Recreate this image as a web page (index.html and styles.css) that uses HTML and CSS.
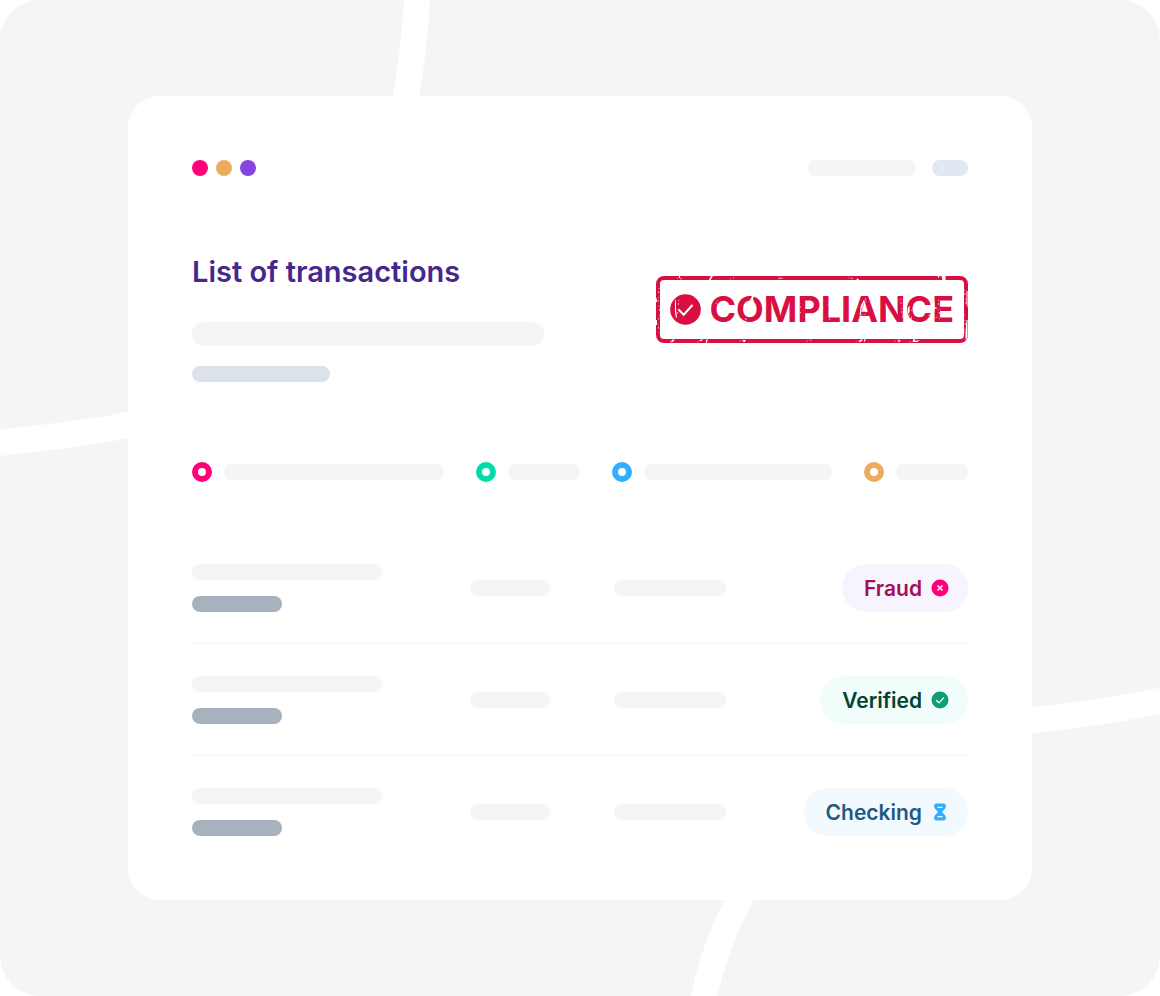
FILE: index.html
```html
<!DOCTYPE html>
<html lang="en">
<head>
  <meta charset="UTF-8" />
  <meta name="viewport" content="width=device-width, initial-scale=1.0"/>
  <title>List of transactions</title>
  <link rel="stylesheet" href="styles.css">
</head>
<body>

<main class="scene">
  <svg class="roads" viewBox="0 0 1160 996" preserveAspectRatio="none" aria-hidden="true">
    <path d="M418 -20L417 0Q414 50 406 96L402 120"/>
    <path d="M-20 446L0 443C45 437 85 434 128 425L150 420"/>
    <path d="M1010 722L1032 720C1075 716 1115 710 1160 701L1180 697"/>
    <path d="M752 876L739 900Q715 945 704 996L700 1016"/>
  </svg>

  <section class="card">
    <div class="toolbar">
      <div class="dots">
        <span class="dot pink"></span>
        <span class="dot orange"></span>
        <span class="dot purple"></span>
      </div>
      <div class="menu">
        <span class="bar menu-long"></span>
        <span class="bar menu-short"></span>
      </div>
    </div>

    <header class="intro">
      <div class="intro-text">
        <h1>List of transactions</h1>
        <div class="bar bar-title"></div>
        <div class="bar bar-subtitle"></div>
      </div>
      <div class="stamp">
        <svg class="stamp-icon" viewBox="0 0 31 31" aria-hidden="true">
          <circle cx="15.5" cy="15.5" r="15.3" fill="#d80f40"/>
          <path d="M8.5 15.5l5.200 5.200L22.500 11" fill="none" stroke="#fff" stroke-width="2"/>
        </svg>
        <span>COMPLIANCE</span>
        <!-- worn ink -->
        <svg class="wear" viewBox="0 0 312 67" preserveAspectRatio="none" aria-hidden="true">
          <g fill="#fff">
            <path d="M55 0l2 0-3 5-1-1zM23 0l1 0 0 2-1 0zM286 0l4 0 0 5-3 0zM282 0l2 0-1 2zM201 3l2 0 0 1-2 0zM123 1l2 1-1 1zM0 22l1 1 0 3-1 0zM0 44l1 0 0 5-1 0zM311 15l1 0 0 17-1-4zM311 44l1 0 0 17-2 3 0-8z"/>
            <path d="M15 66l1-2 2-1-1 3zM43 65l3-2 1 1-2 1zM50 64l2-1-1 4-1 0zM86 65l2-1 2 0-1 2zM203 66l3-3 1 1-2 2zM209 63l1 0-1 3-1-1zM242 66l2-2 1 0-1 2zM257 64l2-1 1 2 3-1-1 2-4 0z"/>
            <path d="M19 22l1 5 0 7 1 7-1 1-1-6zM53 31l2-1 0 7-1 1-1-3zM96 20l2 0-1 4 2 1-2 1-1 3-1-4-2-1 2-1zM89 42l2 1-1 1zM174 36l1 4-1 3z"/>
            <path d="M208 24l1 1-3 7-1 7-1 0 1-9zM213 39l1 5-1 1zM248 23l1 0-1 18-1 0zM252 33l2-4 0 7-2 3zM255 42l1-2 0 4zM275 41l2-3-1 5zM278 27l1-1 0 5 3 1-3 1-1 5-1-2z"/>
          </g>
          <g fill="none" stroke="#fff" stroke-width="1" stroke-dasharray="1 2 2 4" opacity="0.650">
            <path d="M3 12l-1 12 2 13-2 10 1 10M21 2l5 1M74 3l4-1M122 3l6-1M192 2l12 1M309 14l2 16M308 35l2 15-3 12"/>
            <path d="M14 66l5-2M41 66l8-3M84 65l9-1M151 65l5-1M200 66l8-3M239 65l8-2M254 66l12-2"/>
            <path d="M23 24l-2 18M62 24l-3 5M118 38l3 4M144 27l1 12M173 25l1 20M203 44l7-22M205 43l6-20M209 39l4-8M245 23l2 20M250 23l-1 20M252 43l5-11M273 43l2-14M278 44l5-5M283 24l1 20M292 26l-1 16"/>
          </g>
        </svg>
      </div>
    </header>

    <div class="filters">
      <div class="filter"><span class="ring pink"></span><span class="bar"></span></div>
      <div class="filter"><span class="ring green"></span><span class="bar"></span></div>
      <div class="filter"><span class="ring blue"></span><span class="bar"></span></div>
      <div class="filter"><span class="ring orange"></span><span class="bar"></span></div>
    </div>

    <table class="transactions" aria-label="List of transactions">
      <tbody>
        <tr>
          <td class="col-name"><div class="bar bar-name"></div><div class="bar bar-id"></div></td>
          <td class="col-date"><div class="bar bar-date"></div></td>
          <td><div class="bar bar-amount"></div></td>
          <td class="col-status">
            <span class="badge fraud">Fraud
              <svg viewBox="0 0 20 20" aria-hidden="true">
                <circle cx="10" cy="10" r="8.5" fill="#ff007a"/>
                <path d="M7.5 7.5l5 5M12.5 7.5l-5 5" fill="none" stroke="#fff" stroke-width="1.5"/>
              </svg>
            </span>
          </td>
        </tr>
        <tr>
          <td class="col-name"><div class="bar bar-name"></div><div class="bar bar-id"></div></td>
          <td class="col-date"><div class="bar bar-date"></div></td>
          <td><div class="bar bar-amount"></div></td>
          <td class="col-status">
            <span class="badge verified">Verified
              <svg viewBox="0 0 20 20" aria-hidden="true">
                <circle cx="10" cy="10" r="8.5" fill="#0e9f77"/>
                <path d="M6.2 10.2l2.7 2.6 5-5.2" fill="none" stroke="#fff" stroke-width="1.2"/>
              </svg>
            </span>
          </td>
        </tr>
        <tr>
          <td class="col-name"><div class="bar bar-name"></div><div class="bar bar-id"></div></td>
          <td class="col-date"><div class="bar bar-date"></div></td>
          <td><div class="bar bar-amount"></div></td>
          <td class="col-status">
            <span class="badge checking">Checking
              <svg viewBox="0 0 20 20" aria-hidden="true">
                <path d="M6.500 1.500h7q2.300 0 2.300 2.200v1.300q0 1-.8 1.800L12 10l3 3.200q.8.800.8 1.800v1.300q0 2.200-2.300 2.200h-7q-2.300 0-2.300-2.200V15q0-1 .8-1.800L8 10 5 6.800q-.8-.8-.8-1.800V3.700q0-2.200 2.300-2.200z" fill="#2fb0ff"/>
                <path d="M8 5.300h4M8 14.700h4" fill="none" stroke="#fff" stroke-width="1.300" stroke-linecap="round"/>
              </svg>
            </span>
          </td>
        </tr>
      </tbody>
    </table>
  </section>
</main>

</body>
</html>
```
FILE: styles.css
```css
* {
  box-sizing: border-box;
}

body {
  margin: 0;
  background: #ffffff;
  font-family: Inter, 'Open Sans', sans-serif;
}

.scene {
  position: relative;
  min-height: 100vh;
  padding: 96px 128px;
  background: #f3f5f7;
  border-radius: 40px;
  overflow: hidden;
}

/* white roads crossing behind the card */
.roads {
  position: absolute;
  top: 0;
  left: 0;
  width: 100%;
  height: 100%;
  fill: none;
  stroke: #ffffff;
  stroke-width: 26px;
}

.card {
  position: relative;
  padding: 64px;
  background: #ffffff;
  border-radius: 32px;
}

.toolbar, .dots, .menu, .intro, .filter {
  display: flex;
}

.toolbar, .intro {
  justify-content: space-between;
}

.dots {
  gap: 8px;
}

.menu {
  gap: 16px;
}

.dot {
  width: 16px;
  height: 16px;
  border-radius: 50%;
  background: currentColor;
}

.pink {
  color: #ff007a;
}

.orange {
  color: #efab5d;
}

.purple {
  color: #8645df;
}

.green {
  color: #00dda9;
}

.blue {
  color: #2fb0ff;
}

.bar {
  height: 16px;
  border-radius: 8px;
  background: #f3f5f7;
}

.menu-long {
  width: 108px;
}

.menu-short {
  width: 36px;
  background: #e1e8f1;
}

.intro {
  align-items: flex-start;
  margin-top: 76px;
}

h1 {
  margin: 0 0 30px;
  color: #45278d;
  font-size: 29px;
  font-weight: 600;
  line-height: 40px;
}

.bar-title {
  width: 352px;
  height: 24px;
  border-radius: 12px;
}

.bar-subtitle {
  width: 138px;
  margin-top: 20px;
  background: #dbe2e9;
}

.stamp {
  position: relative;
  display: flex;
  align-items: center;
  gap: 8px;
  margin-top: 24px;
  padding: 0 10px;
  border: 4px solid #d80f40;
  border-radius: 8px;
  color: #d80f40;
  font-size: 36px;
  font-weight: 700;
  line-height: 59px;
}

.stamp-icon {
  width: 31px;
  height: 31px;
}

.wear {
  position: absolute;
  top: -4px;
  left: -4px;
  width: calc(100% + 8px);
  height: calc(100% + 8px);
}

.filters {
  display: grid;
  grid-template-columns: 63fr 26fr 55fr 26fr;
  gap: 32px;
  margin-top: 80px;
}

.filter {
  align-items: center;
  gap: 12px;
}

.filter .bar {
  flex: 1;
}

.ring {
  width: 20px;
  height: 20px;
  border: 6px solid currentColor;
  border-radius: 50%;
}

.transactions {
  width: 100%;
  margin-top: 50px;
  border-collapse: separate;
  border-spacing: 0;
}

.transactions td {
  padding: 32px 0 30px;
  border-bottom: 2px solid #f9fafb;
  vertical-align: middle;
}

.transactions tr:last-child td {
  padding-bottom: 0;
  border-bottom: none;
}

.transactions .col-name {
  width: 278px;
}

.transactions .col-date {
  width: 144px;
}

.col-status {
  text-align: right;
}

.bar-name {
  width: 190px;
}

.bar-id {
  width: 90px;
  margin-top: 16px;
  background: #a8b2bf;
}

.bar-date {
  width: 80px;
}

.bar-amount {
  width: 112px;
}

.badge {
  display: inline-flex;
  align-items: center;
  gap: 8px;
  height: 48px;
  padding: 0 18px 0 22px;
  border-radius: 24px;
  font-size: 21px;
  font-weight: 600;
  vertical-align: top;
}

.badge svg {
  width: 20px;
  height: 20px;
}

.fraud {
  background: #f7f4fe;
  color: #a30d59;
}

.verified {
  background: #f0fdfb;
  color: #04432f;
}

.checking {
  background: #f2f9ff;
  color: #1f5a82;
}
```
